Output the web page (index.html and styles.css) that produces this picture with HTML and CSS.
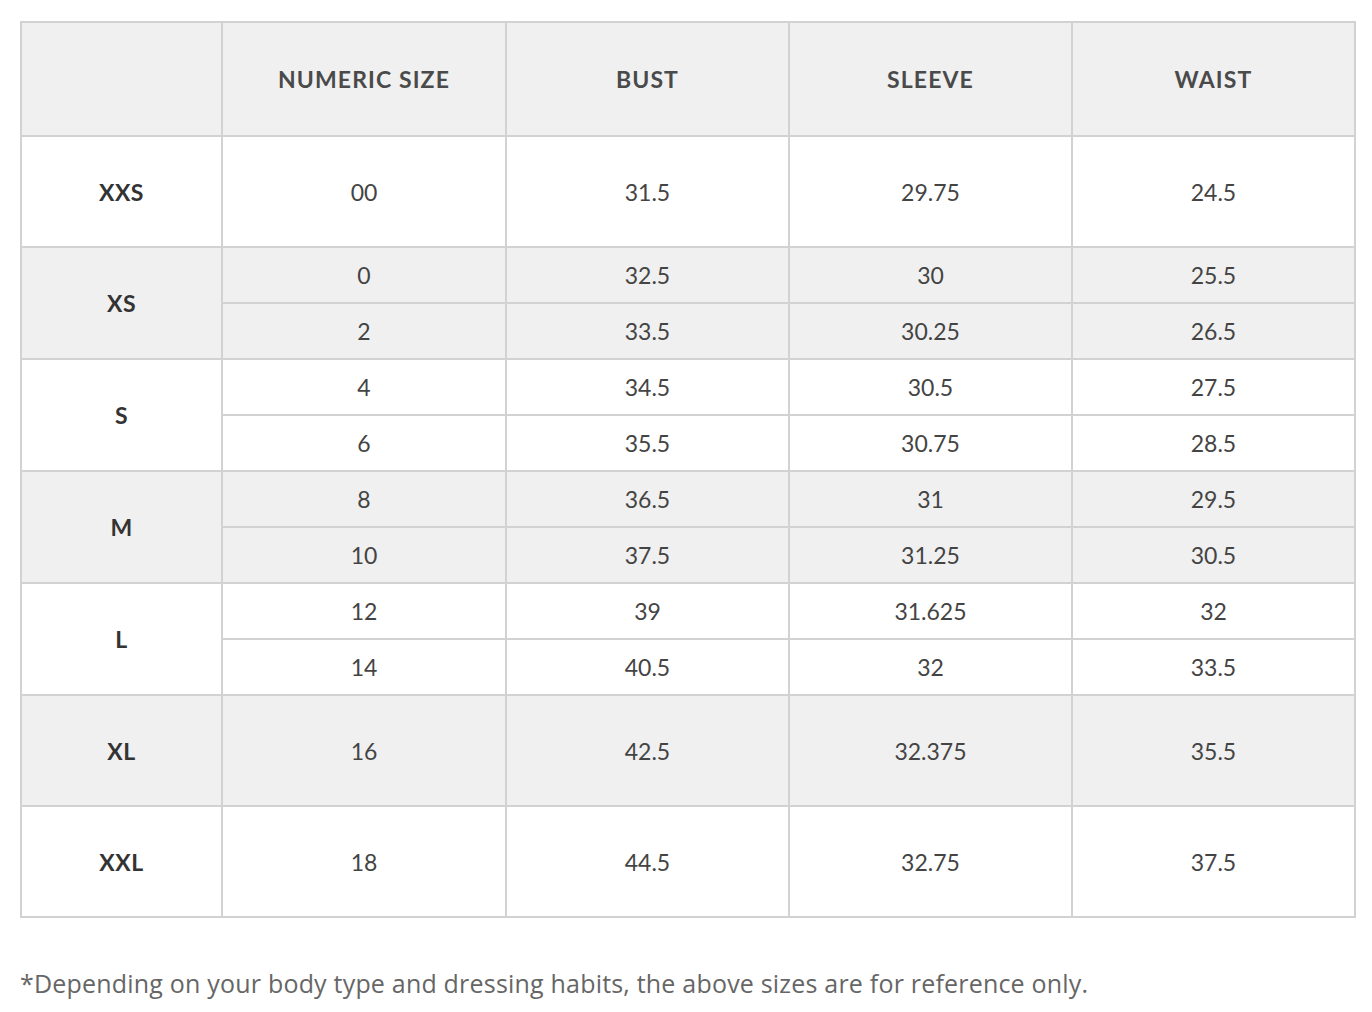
FILE: index.html
```html
<!DOCTYPE html>
<html>
<head>
<meta charset="utf-8">
<link rel="stylesheet" href="styles.css">
</head>
<body>
<table class="size-table">
  <colgroup>
    <col class="c0"><col class="c1"><col class="c2"><col class="c3"><col class="c4">
  </colgroup>
  <thead>
    <tr class="head"><th></th><th>NUMERIC SIZE</th><th>BUST</th><th>SLEEVE</th><th>WAIST</th></tr>
  </thead>
  <tbody>
    <tr class="tall"><th>XXS</th><td>00</td><td>31.5</td><td>29.75</td><td>24.5</td></tr>
    <tr class="half shade"><th rowspan="2">XS</th><td>0</td><td>32.5</td><td>30</td><td>25.5</td></tr>
    <tr class="half shade"><td>2</td><td>33.5</td><td>30.25</td><td>26.5</td></tr>
    <tr class="half"><th rowspan="2">S</th><td>4</td><td>34.5</td><td>30.5</td><td>27.5</td></tr>
    <tr class="half"><td>6</td><td>35.5</td><td>30.75</td><td>28.5</td></tr>
    <tr class="half shade"><th rowspan="2">M</th><td>8</td><td>36.5</td><td>31</td><td>29.5</td></tr>
    <tr class="half shade"><td>10</td><td>37.5</td><td>31.25</td><td>30.5</td></tr>
    <tr class="half"><th rowspan="2">L</th><td>12</td><td>39</td><td>31.625</td><td>32</td></tr>
    <tr class="half"><td>14</td><td>40.5</td><td>32</td><td>33.5</td></tr>
    <tr class="tall shade"><th>XL</th><td>16</td><td>42.5</td><td>32.375</td><td>35.5</td></tr>
    <tr class="tall"><th>XXL</th><td>18</td><td>44.5</td><td>32.75</td><td>37.5</td></tr>
  </tbody>
</table>
<p class="note">*Depending on your body type and dressing habits, the above sizes are for reference only.</p>
</body>
</html>
```
FILE: styles.css
```css
html, body {
  margin: 0;
  padding: 0;
  background: #fff;
}
body {
  padding: 21px 16px 0 20px;
  font-family: "Lato", "Liberation Sans", sans-serif;
}
.size-table {
  border-collapse: collapse;
  table-layout: fixed;
  width: 1334px;
  font-size: 23px;
  color: #444;
}
.c0 { width: 201px; }
.c1 { width: 284px; }
.c2 { width: 283px; }
.c3 { width: 283px; }
.c4 { width: 283px; }
.size-table th,
.size-table td {
  border: 2px solid #d2d2d2;
  text-align: center;
  vertical-align: middle;
  padding: 0;
}
.size-table th {
  font-weight: 700;
  color: #333;
  letter-spacing: 0.5px;
}
.size-table thead th {
  font-weight: 700;
  color: #4a4a4a;
  font-size: 23px;
  letter-spacing: 1.1px;
}
.head { height: 114px; background: #f0f0f0; }
.tall { height: 111px; }
.half { height: 56px; }
.shade { background: #f0f0f0; }
.note {
  margin: 48px 0 0 0;
  font-family: "Open Sans", "Lato", sans-serif;
  font-size: 25px;
  line-height: 34px;
  color: #666;
  letter-spacing: 0.2px;
}
```
